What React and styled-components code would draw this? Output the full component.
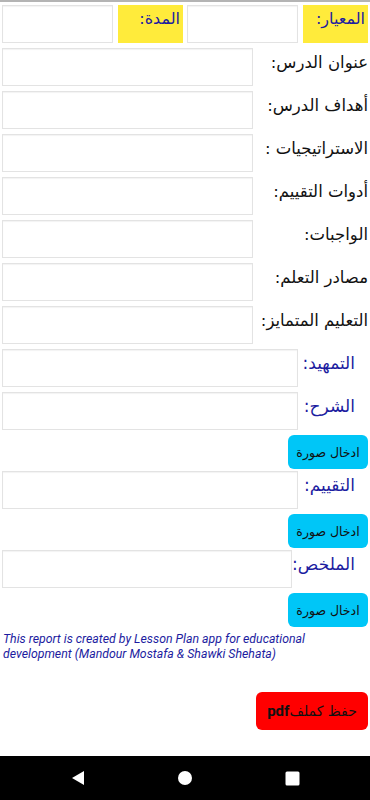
import styled, { createGlobalStyle } from "styled-components";

const GlobalStyle = createGlobalStyle`
  html, body {
    margin: 0;
    padding: 0;
    background: #ffffff;
  }
  * { box-sizing: border-box; }
`;

const topFields = [
  { label: "المعيار:" },
  { label: "المدة:" },
];

const plainFields = [
  "عنوان الدرس:",
  "أهداف الدرس:",
  "الاستراتيجيات :",
  "أدوات التقييم:",
  "الواجبات:",
  "مصادر التعلم:",
  "التعليم المتمايز:",
];

const stageFields = [
  { label: "التمهيد:", image: false },
  { label: "الشرح:", image: true },
  { label: "التقييم:", image: true },
  { label: "الملخص:", image: true },
];

function App() {
  return (
    <>
      <GlobalStyle />
      <Screen>
        <Content dir="rtl">
          <TopRow>
            {topFields.map((f) => (
              <TopPair key={f.label}>
                <YellowLabel>{f.label}</YellowLabel>
                <Field />
              </TopPair>
            ))}
          </TopRow>

          {plainFields.map((label) => (
            <Row key={label}>
              <Label>{label}</Label>
              <Field $w={251} />
            </Row>
          ))}

          {stageFields.map((f) => (
            <Stage key={f.label}>
              <Row>
                <BlueLabel>{f.label}</BlueLabel>
                <Field $w={296} />
              </Row>
              {f.image && <ImageButton>ادخال صورة</ImageButton>}
            </Stage>
          ))}

          <Credit dir="ltr">
            This report is created by Lesson Plan app for educational
            development (Mandour Mostafa &amp; Shawki Shehata)
          </Credit>

          <SaveButton>
            حفظ كملف<Pdf>pdf</Pdf>
          </SaveButton>
        </Content>

        <NavBar>
          <svg width="14" height="16" viewBox="0 0 14 16">
            <path d="M13 1 L1 8 L13 15 Z" fill="#fff" />
          </svg>
          <svg width="16" height="16" viewBox="0 0 16 16">
            <circle cx="8" cy="8" r="7" fill="#fff" />
          </svg>
          <svg width="15" height="15" viewBox="0 0 15 15">
            <rect x="0.5" y="0.5" width="14" height="14" rx="1.5" fill="#fff" />
          </svg>
        </NavBar>
      </Screen>
    </>
  );
}

export default App;

// Styled Components
const Screen = styled.div`
  width: 370px;
  height: 800px;
  display: flex;
  flex-direction: column;
  border-top: 2px solid #b4b4b4;
  font-family: "DejaVu Sans", "Noto Sans", sans-serif;
`;

const Content = styled.div`
  flex: 1;
  display: flex;
  flex-direction: column;
  padding: 3px 2px 0 2px;
`;

const TopRow = styled.div`
  display: flex;
  gap: 4px;
  margin-bottom: 5px;
`;

const TopPair = styled.div`
  display: flex;
  gap: 5px;
`;

const YellowLabel = styled.div`
  width: 65px;
  height: 38px;
  background: #ffeb3b;
  color: #1c1ca0;
  font-size: 16px;
  padding: 4px 3px 0 0;
`;

const Field = styled.div`
  width: ${(p) => (p.$w ? p.$w : 111)}px;
  height: 38px;
  background: #fff;
  border: 1px solid #e3e3e3;
  box-shadow: inset 0 1px 1px rgba(0, 0, 0, 0.05);
`;

const Row = styled.div`
  display: flex;
  justify-content: space-between;
  margin-bottom: 5px;
`;

const Label = styled.div`
  font-size: 16.5px;
  color: #111;
  padding-top: 5px;
  white-space: nowrap;
`;

const BlueLabel = styled.div`
  font-size: 17px;
  color: #1c1ca0;
  padding: 4px 13px 0 0;
  white-space: nowrap;
`;

const Stage = styled.div`
  display: flex;
  flex-direction: column;
  align-items: stretch;
`;

const ImageButton = styled.button`
  align-self: flex-start;
  width: 80px;
  height: 34px;
  margin: 0 0 2px 0;
  padding: 0;
  border: none;
  border-radius: 6px;
  background: #00c6f7;
  color: #111;
  font-family: "DejaVu Sans", sans-serif;
  font-size: 12.5px;
`;

const Credit = styled.p`
  margin: 3px 0 0 1px;
  font-family: Roboto, "Liberation Sans", sans-serif;
  font-style: italic;
  font-size: 12.3px;
  line-height: 15px;
  color: #1c1ca0;
  text-align: left;
`;

const SaveButton = styled.button`
  align-self: flex-start;
  margin-top: 30px;
  width: 112px;
  height: 38px;
  border: none;
  border-radius: 6px;
  background: #ff0000;
  color: #111;
  font-family: "DejaVu Sans", sans-serif;
  font-size: 14px;
  padding: 0;
`;

const Pdf = styled.span`
  font-family: Roboto, "Liberation Sans", sans-serif;
  font-weight: bold;
  font-size: 15px;
`;

const NavBar = styled.div`
  height: 44px;
  background: #000;
  display: flex;
  align-items: center;
  justify-content: space-between;
  padding: 0 70px 0 71px;
`;
